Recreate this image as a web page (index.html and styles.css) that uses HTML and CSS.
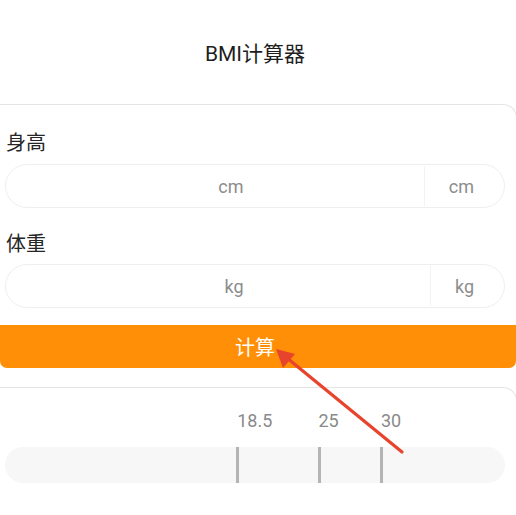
FILE: index.html
```html
<!DOCTYPE html>
<html lang="zh">
<head>
<meta charset="utf-8">
<title>BMI计算器</title>
<link rel="stylesheet" href="styles.css">
</head>
<body>
<div class="page">
  <header class="title-bar">BMI计算器</header>

  <section class="card form-card">
    <div class="label">身高</div>
    <div class="field">
      <span class="placeholder">cm</span>
      <span class="suffix">cm</span>
    </div>
    <div class="label label-second">体重</div>
    <div class="field">
      <span class="placeholder">kg</span>
      <span class="suffix">kg</span>
    </div>
  </section>

  <button class="calc-btn">计算</button>

  <section class="card scale-card">
    <div class="scale">
      <div class="scale-labels">
        <span class="scale-label" style="left: 46.25%">18.5</span>
        <span class="scale-label" style="left: 62.5%">25</span>
        <span class="scale-label" style="left: 75%">30</span>
      </div>
      <div class="scale-bar">
        <span class="tick" style="left: 46.25%"></span>
        <span class="tick" style="left: 62.5%"></span>
        <span class="tick" style="left: 75%"></span>
      </div>
    </div>
  </section>

  <svg class="annotation" width="516" height="515" viewBox="0 0 516 515" aria-hidden="true">
    <line x1="402" y1="452" x2="287" y2="358" stroke="#e8432c" stroke-width="3.2" stroke-linecap="round"/>
    <polygon points="276,349 283,368 295,354" fill="#e8432c"/>
  </svg>
</div>
</body>
</html>
```

FILE: styles.css
```css
* {
  box-sizing: border-box;
}

html, body {
  margin: 0;
  padding: 0;
  background: #ffffff;
}

body {
  font-family: "Roboto", "Noto Sans CJK SC", sans-serif;
  color: #333333;
}

.page {
  position: relative;
  width: 516px;
  height: 515px;
  overflow: hidden;
}

.title-bar {
  height: 104px;
  display: flex;
  align-items: center;
  justify-content: center;
  font-size: 21px;
  color: #1e1e1e;
  padding-right: 6px;
}

.card {
  margin-left: -14px;
  margin-right: -1px;
  padding-left: 18px;
  padding-right: 12px;
  border: 1px solid #e4e4e4;
  border-bottom: none;
  border-radius: 14px 14px 0 0;
  background: #ffffff;
}

.form-card {
  padding-top: 24px;
  padding-bottom: 17px;
}

.label {
  height: 28px;
  line-height: 28px;
  font-size: 20px;
  color: #262626;
  margin-bottom: 7px;
  margin-left: 1px;
}

.label-second {
  margin-top: 22px;
  margin-bottom: 6px;
}

.field {
  display: flex;
  align-items: stretch;
  width: 500px;
  height: 44px;
  border: 1px solid #efefef;
  border-radius: 22px;
  background: #ffffff;
}

.placeholder {
  flex: 1;
  display: flex;
  align-items: center;
  justify-content: center;
  padding-left: 32px;
  font-size: 18px;
  color: #8c8c8c;
}

.suffix {
  display: flex;
  align-items: center;
  padding-left: 24px;
  padding-right: 30px;
  border-left: 1px solid #f2f2f2;
  margin: 1px 0;
  font-size: 18px;
  color: #8c8c8c;
}

.calc-btn {
  display: block;
  width: 516px;
  height: 43px;
  margin: 0;
  padding: 0;
  border: none;
  border-radius: 0 0 7px 7px;
  background: #ff8f07;
  color: #ffffff;
  font-family: "Roboto", "Noto Sans CJK SC", sans-serif;
  font-size: 20px;
  padding-right: 6px;
}

.scale-card {
  margin-top: 19px;
  padding-top: 21px;
  height: 200px;
}

.scale {
  width: 500px;
}

.scale-labels {
  position: relative;
  height: 24px;
  margin-bottom: 14px;
}

.scale-label {
  position: absolute;
  top: 0;
  line-height: 24px;
  font-size: 18px;
  color: #8a8a8a;
  margin-left: 1px;
}

.scale-bar {
  position: relative;
  height: 36px;
  border-radius: 18px;
  background: #f7f7f7;
}

.tick {
  position: absolute;
  top: 0;
  bottom: 0;
  width: 3px;
  background: #b4b4b4;
}

.annotation {
  position: absolute;
  top: 0;
  left: 0;
  pointer-events: none;
}
```
